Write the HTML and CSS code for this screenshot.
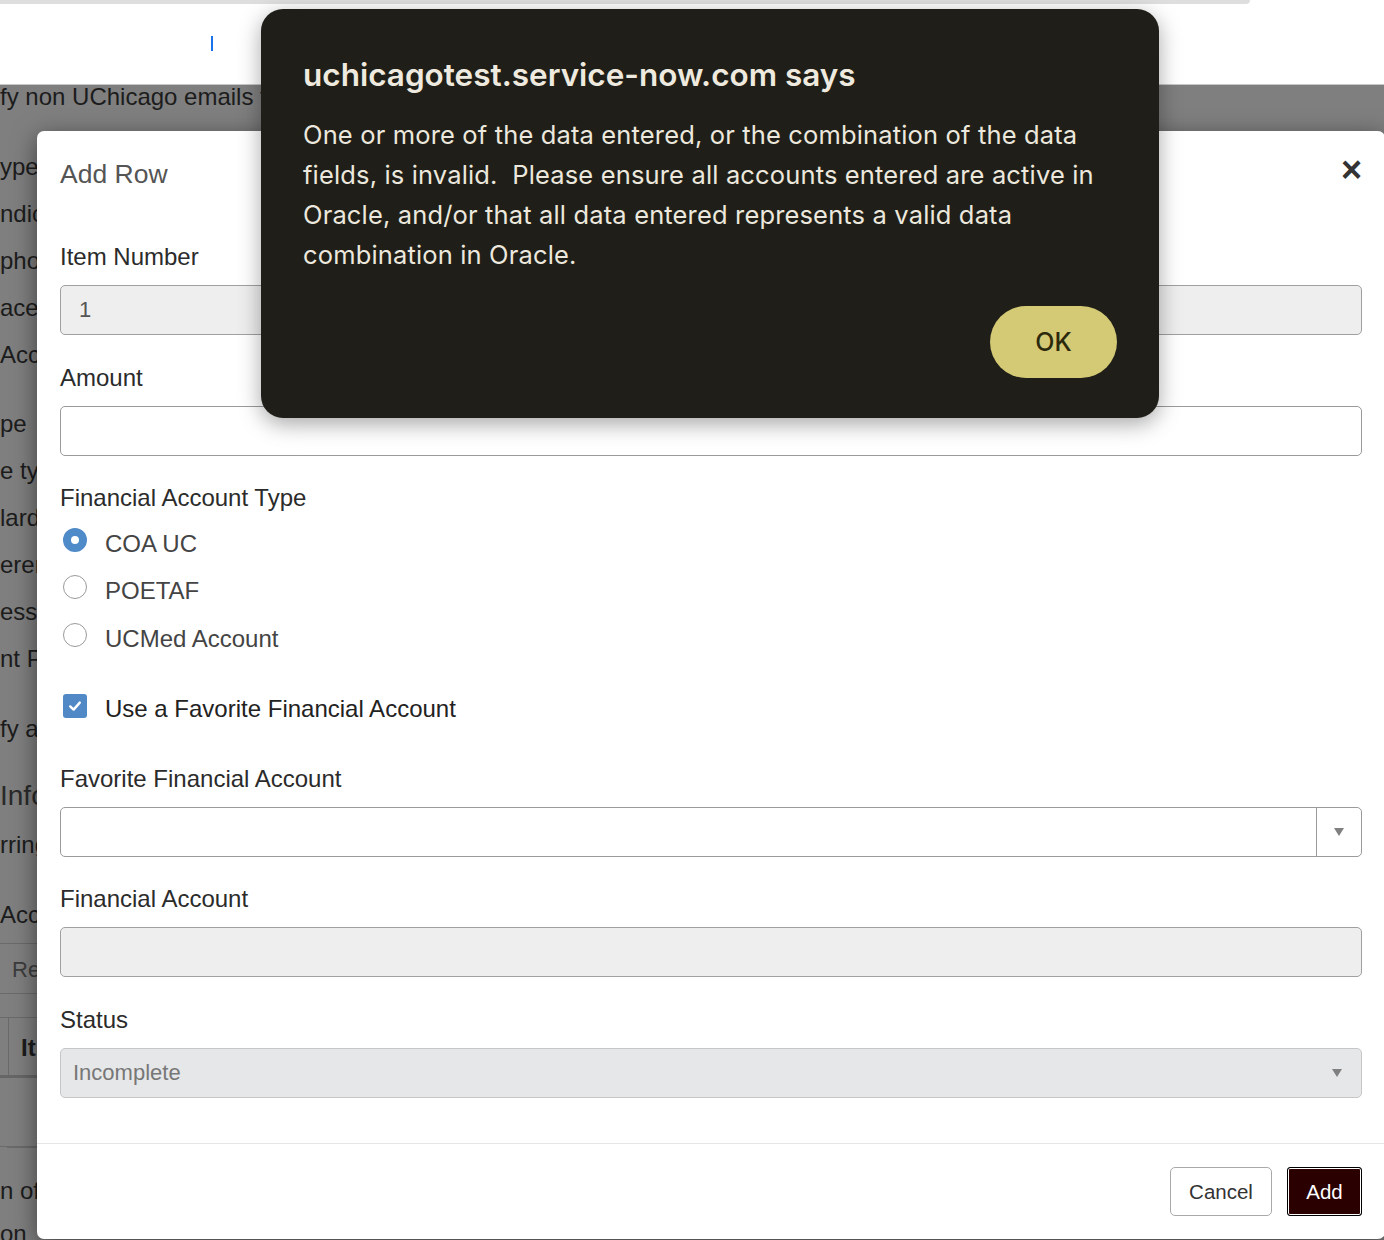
FILE: index.html
```html
<!DOCTYPE html>
<html lang="en">
  <head>
    <meta charset="UTF-8">
    <title>Add Row</title>
    <link rel="stylesheet" href="styles.css">
  </head>
  <body>
    <div class="chrome">
      <div class="tabstrip"></div>
      <div class="toolbar">
        <div class="search"><span class="caret"></span></div>
        <div class="tools"></div>
      </div>
    </div>

    <div class="page">
      <div class="intro">fy non UChicago emails f</div>
      <div class="bg-group first">
        <div>ype</div>
        <div>ndic</div>
        <div>phon</div>
        <div>ace/</div>
        <div>Acce</div>
      </div>
      <div class="bg-group second">
        <div>pe</div>
        <div>e ty</div>
        <div>lard</div>
        <div>eren</div>
        <div>ess</div>
        <div>nt P</div>
      </div>
      <div class="bg-group third">
        <div>fy a</div>
        <div class="bg-heading">Info</div>
        <div>rring</div>
      </div>
      <div class="bg-group fourth">
        <div>Acc</div>
      </div>
      <div class="bg-table">
        <div class="bg-tab">Re</div>
        <div class="bg-thead"><span class="bg-cell"></span><span class="bg-th">It</span></div>
        <div class="bg-row"></div>
      </div>
      <div class="bg-group fifth">
        <div>n of</div>
        <div class="last">on</div>
      </div>
    </div>

    <div class="modal">
      <div class="modal-header">
        <h4 class="modal-title">Add Row</h4>
        <button class="close">&times;</button>
      </div>
      <div class="modal-body">
        <div class="form-group">
          <label>Item Number</label>
          <div class="form-control readonly">1</div>
        </div>
        <div class="form-group">
          <label>Amount</label>
          <div class="form-control"></div>
        </div>
        <div class="radio-group">
          <label>Financial Account Type</label>
          <div class="radio-list">
            <div class="radio"><span class="radio-dot checked"></span>COA UC</div>
            <div class="radio"><span class="radio-dot"></span>POETAF</div>
            <div class="radio"><span class="radio-dot"></span>UCMed Account</div>
          </div>
          <div class="checkbox">
            <span class="check-box">
              <svg width="16" height="16" viewBox="0 0 16 16"><path d="M3.2 8.4 L6.6 11.6 L12.8 4.6" fill="none" stroke="#fff" stroke-width="2.4" stroke-linecap="round" stroke-linejoin="round"/></svg>
            </span>
            Use a Favorite Financial Account
          </div>
        </div>
        <div class="form-group">
          <label>Favorite Financial Account</label>
          <div class="form-control lookup">
            <span class="lookup-value"></span>
            <span class="lookup-btn"><span class="arrow"></span></span>
          </div>
        </div>
        <div class="form-group">
          <label>Financial Account</label>
          <div class="form-control readonly"></div>
        </div>
        <div class="form-group">
          <label>Status</label>
          <div class="form-control select-disabled">
            <span>Incomplete</span>
            <span class="arrow"></span>
          </div>
        </div>
      </div>
      <div class="modal-footer">
        <button class="btn btn-default">Cancel</button>
        <button class="btn btn-primary">Add</button>
      </div>
    </div>

    <div class="alert">
      <h2>uchicagotest.service-now.com says</h2>
      <p>One or more of the data entered, or the combination of the data<br>
      fields, is invalid.&nbsp; Please ensure all accounts entered are active in<br>
      Oracle, and/or that all data entered represents a valid data<br>
      combination in Oracle.</p>
      <div class="alert-actions">
        <button class="btn-ok">OK</button>
      </div>
    </div>
  </body>
</html>
```

FILE: styles.css
```css
*{
margin:0;
padding:0;
box-sizing:border-box;
}

body{
    width:1384px;
    height:1240px;
    overflow:hidden;
    position:relative;
    background-color:#7f7f7f;
    font-family:"Liberation Sans", Arial, sans-serif;
    color:#333;
}

button{
    font-family:inherit;
    cursor:pointer;
}

/* browser chrome / top frame (not dimmed) */
.chrome{
    height:85px;
    background-color:#fff;
    border-bottom:1px solid #c8c8c8;
}

.tabstrip{
    height:4px;
    width:1250px;
    background-color:#dedede;
    border-bottom-right-radius:6px;
}

.toolbar{
    display:flex;
    justify-content:space-between;
    padding-top:16px;
}

.search{
    width:262px;
    height:40px;
    padding:16px 0 0 211px;
}

.caret{
    display:block;
    width:2px;
    height:15px;
    background-color:#1a73e8;
}

.tools{
    width:224px;
    height:38px;
}

/* page behind the overlay */
.page{
    font-size:24px;
    color:#1c1c1c;
    white-space:nowrap;
    overflow:hidden;
}

.intro{
    line-height:24px;
    margin-bottom:34px;
}

.bg-group div{
    line-height:47px;
}

.bg-group.second{
    margin-top:22px;
}

.bg-group.third{
    margin-top:23px;
}

.bg-group .bg-heading{
    font-size:28px;
    color:#2a2a2a;
    margin-top:20px;
    margin-bottom:2px;
}

.bg-group.fourth{
    margin-top:23px;
}

.bg-table{
    margin-top:5px;
    border-top:1px solid #6a6a6a;
}

.bg-tab{
    line-height:47px;
    padding:2px 0 0 12px;
    color:#3c3c3c;
    font-size:22px;
    border-bottom:1px solid #6a6a6a;
}

.bg-thead{
    display:flex;
    margin-top:23px;
    height:61px;
    border-top:1px solid #6a6a6a;
    border-bottom:3px solid #666;
}

.bg-cell{
    width:9px;
    border-right:1px solid #6a6a6a;
}

.bg-th{
    font-weight:bold;
    padding:16px 0 0 12px;
}

.bg-row{
    height:69px;
    border-bottom:1px solid #6a6a6a;
    box-shadow:0 8px 0 -7px #6a6a6a;
}

.bg-group.fifth{
    margin-top:20px;
}

.bg-group .last{
    line-height:40px;
}

/* modal */
.modal{
    position:absolute;
    left:37px;
    top:131px;
    width:1348px;
    height:1108px;
    background-color:#fff;
    border-radius:7px;
    box-shadow:0 6px 24px rgba(0,0,0,.5);
    overflow:hidden;
}

.modal-header{
    display:flex;
    justify-content:space-between;
    align-items:flex-start;
    padding:24px 23px 0 23px;
    height:111px;
}

.modal-title{
    font-size:26.5px;
    font-weight:normal;
    line-height:38px;
    color:#555;
}

.close{
    border:0;
    background:none;
    font-size:36px;
    font-weight:bold;
    line-height:30px;
    color:#333;
    margin-top:0;
    margin-right:0;
}

.modal-body{
    padding:0 23px 18px 23px;
}

label{
    display:block;
    font-size:24px;
    line-height:30px;
    color:#2b2b2b;
}

.form-group{
    margin-bottom:27.5px;
}

.form-group label{
    margin-bottom:13px;
}

.form-control{
    height:50px;
    border:1px solid #9a9a9a;
    border-radius:5px;
    background-color:#fff;
    font-size:22px;
    line-height:48px;
    padding:0 18px;
    color:#555;
}

.form-control.readonly{
    background-color:#eee;
    border-color:#a0a0a0;
}

.form-control.lookup{
    display:flex;
    padding:0;
}

.lookup-value{
    flex:1;
}

.lookup-btn{
    width:45px;
    border-left:1px solid #9a9a9a;
    display:flex;
    align-items:center;
    justify-content:center;
}

.arrow{
    width:0;
    height:0;
    border-left:5px solid transparent;
    border-right:5px solid transparent;
    border-top:8px solid #808080;
}

.form-control.select-disabled{
    display:flex;
    justify-content:space-between;
    align-items:center;
    background-color:#e6e7e9;
    border-color:#c6c6c6;
    color:#777;
    padding:0 19px 0 12px;
}

.radio-group{
    margin-bottom:31px;
}

.radio-list{
    margin-top:7px;
}

.radio,
.checkbox{
    display:flex;
    align-items:center;
    height:47.5px;
    font-size:24px;
    color:#444;
}

.radio-dot{
    width:24px;
    height:24px;
    margin:-8px 18px 0 3px;
    border:1px solid #9a9a9a;
    border-radius:50%;
    background-color:#fff;
}

.radio-dot.checked{
    border:8px solid #4f8ac9;
}

.checkbox{
    margin-top:22px;
    height:48px;
    color:#222;
}

.check-box{
    display:flex;
    align-items:center;
    justify-content:center;
    width:24px;
    height:24px;
    margin:-6px 18px 0 3px;
    border-radius:3px;
    background-color:#5089c6;
}

.modal-footer{
    display:flex;
    justify-content:flex-end;
    gap:15px;
    border-top:1px solid #e5e5e5;
    padding:23px 23px 0 23px;
}

.btn{
    height:49px;
    font-size:20.5px;
    border-radius:5px;
    padding:0 18px;
}

.btn-default{
    width:102px;
    background-color:#fff;
    color:#333;
    border:1px solid #a9a9a9;
}

.btn-primary{
    width:75px;
    background-color:#2a0000;
    color:#fff;
    border:1px solid #000;
    border-radius:3px;
    box-shadow:inset 0 0 0 1px #fff;
}

/* native alert dialog */
.alert{
    position:absolute;
    left:261px;
    top:9px;
    width:898px;
    height:409px;
    padding:46px 42px 0 42px;
    background-color:#1f1e18;
    border-radius:22px;
    box-shadow:0 6px 22px rgba(0,0,0,.35);
    font-family:Inter, "Noto Sans", sans-serif;
    color:#ece8dd;
}

.alert h2{
    font-size:31.5px;
    font-weight:600;
    line-height:40px;
    color:#efeadf;
}

.alert p{
    margin-top:20px;
    font-size:25.5px;
    line-height:40px;
    letter-spacing:0.15px;
}

.alert-actions{
    display:flex;
    justify-content:flex-end;
    margin-top:31px;
}

.btn-ok{
    width:127px;
    height:72px;
    border:0;
    border-radius:36px;
    background-color:#d4c975;
    color:#2c290c;
    font-family:Inter, "Noto Sans", sans-serif;
    font-size:25px;
    font-weight:500;
}
```
